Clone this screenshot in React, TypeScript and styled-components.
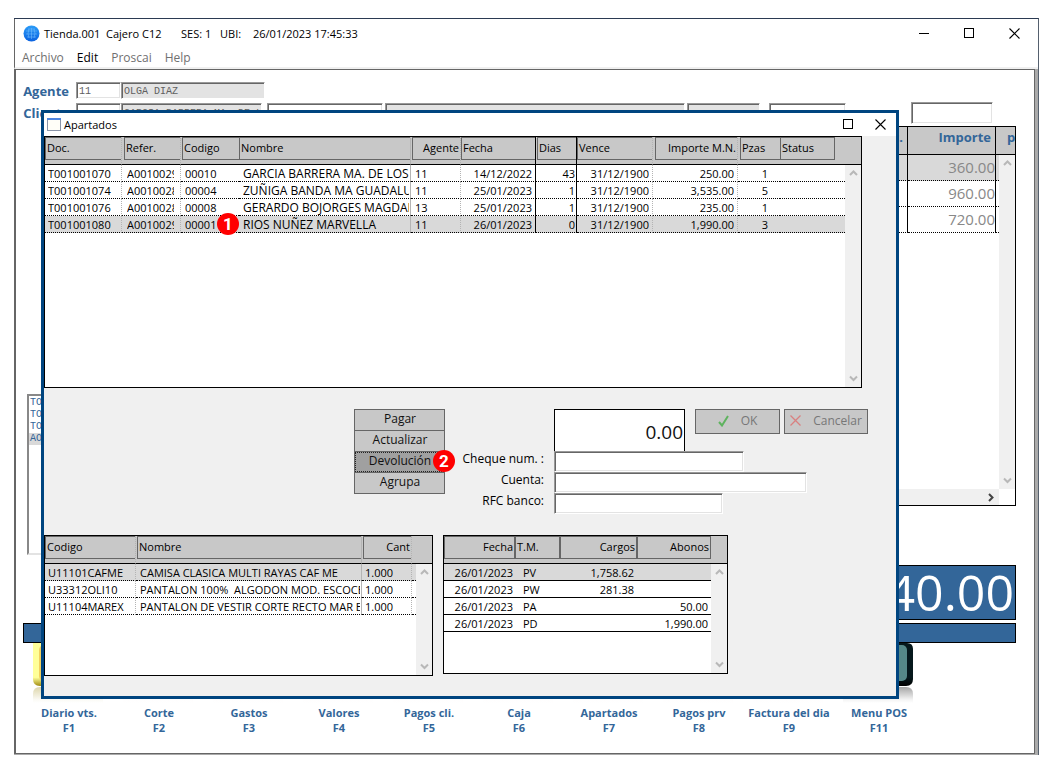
import React from "react";
import styled, { createGlobalStyle, css } from "styled-components";

const C = {
  blue: "#336699",
  frame: "#004580",
  line: "#666666",
  head: "#c8c8c8",
  sel: "#d9d9d9",
  face: "#f0f0f0",
};

const Global = createGlobalStyle`
  *, *::before, *::after { box-sizing: border-box; }
  body { margin: 0; background: #fff; font-family: "Open Sans", "Noto Sans", sans-serif; font-size: 12px; color: #111; }
  button, input { font: inherit; color: inherit; padding: 0; margin: 0; border-radius: 0; }
  ul { list-style: none; margin: 0; padding: 0; }
`;

/* ---------- main window ---------- */

const Page = styled.div`
  display: flex;
  min-height: 100vh;
  padding: 18px 8px 10px 14px;
`;

const MainWindow = styled.main`
  position: relative;
  flex: 1;
  min-width: 0;
  display: flex;
  flex-direction: column;
  background: #fff;
  border-top: 1px solid #2b3a52;
  border-right: 1px solid #55606e;
`;

const TitleBar = styled.header`
  display: flex;
  align-items: center;
  height: 29px;
  padding: 0 18px 0 8px;
  border-left: 1px solid ${C.line};
  white-space: nowrap;
`;

const TitleText = styled.h1`
  display: flex;
  flex: 1;
  margin: 0 0 0 4px;
  font-size: 11px;
  font-weight: 400;
  color: #000;
`;

const TitlePart = styled.span<{ $w: number }>`
  min-width: ${(p) => p.$w}px;
`;

const WindowButtons = styled.div<{ $gap: number }>`
  display: flex;
  gap: ${(p) => p.$gap}px;
`;

const WindowButton = styled.button`
  display: flex;
  border: 0;
  background: none;
`;

const MenuBar = styled.nav`
  display: flex;
  gap: 13px;
  height: 21px;
  padding-left: 7px;
  border-left: 1px solid ${C.line};
  border-bottom: 2px solid ${C.face};
`;

const MenuItem = styled.button<{ $active?: boolean }>`
  border: 0;
  background: none;
  line-height: 19px;
  font-size: 12px;
  color: ${(p) => (p.$active ? "#000" : "#707070")};
`;

const Body = styled.div`
  flex: 1;
  display: flex;
  flex-direction: column;
  border-right: 3px solid #aaaaaa;
  border-bottom: 1px solid #aaaaaa;
`;

const Inner = styled.div`
  flex: 1;
  border: 1px solid ${C.line};
  border-left-width: 2px;
  padding: 12px 18px 0 7px;
`;

const FieldRow = styled.div<{ $h: number }>`
  display: flex;
  align-items: center;
  height: ${(p) => p.$h}px;
`;

const FieldLabel = styled.label`
  width: 46px;
  margin-right: 7px;
  display: flex;
  justify-content: flex-end;
  font-weight: 700;
  font-size: 13px;
  line-height: 16px;
  color: ${C.blue};
`;

const Input = styled.input<{ $w: number; $h: number; $gray?: boolean; $ml?: number }>`
  width: ${(p) => p.$w}px;
  height: ${(p) => p.$h}px;
  margin-left: ${(p) => p.$ml ?? 0}px;
  padding: 2px 2px 0;
  border: 1px solid;
  border-color: #999 #fff #fff #999;
  box-shadow: inset 1px 1px ${C.line}, inset -1px -1px #e3e3e3;
  background: ${(p) => (p.$gray ? "#e3e3e3" : "#fff")};
  font-family: "Liberation Mono", monospace;
  font-size: 10px;
  color: #606060;
  outline: 0;
`;

const SaleArea = styled.div`
  display: flex;
  gap: 12px;
  padding-left: 4px;
`;

const Tickets = styled.ul`
  align-self: flex-end;
  width: 210px;
  height: 161px;
  padding: 1px 0;
  border: 2px solid;
  border-color: #888 #e3e3e3 #e3e3e3 #888;
  font: 10px/12px "Liberation Mono", monospace;
  color: ${C.blue};
`;

const Ticket = styled.li<{ $on?: boolean }>`
  padding-left: 1px;
  background: ${(p) => (p.$on ? C.sel : "none")};
`;

const SaleGrid = styled.div`
  flex: 1;
  min-width: 0;
  height: 380px;
  margin-bottom: 49px;
  display: flex;
  border: 1px solid #000;
`;

const SaleMain = styled.div`
  flex: 1;
  min-width: 0;
  display: flex;
  flex-direction: column;
`;

const SaleTable = styled.table`
  width: 100%;
  table-layout: fixed;
  border-spacing: 0;

  th {
    height: 28px;
    padding: 0 4px 6px;
    border-right: 1px solid #000;
    border-bottom: 1px solid #000;
    background: ${C.head};
    font-size: 13px;
    line-height: 21px;
    color: ${C.blue};
    text-align: right;
  }
  td {
    height: 26px;
    padding: 0;
    border-right: 1px solid #000;
    border-bottom: 1px dotted #000;
    font-size: 15px;
    line-height: 25px;
    color: #888;
    text-align: right;
  }
  th:last-child, td:last-child { padding: 0; border-right: 0; }
  tbody tr:first-child td { background: ${C.sel}; }
`;

const HScroll = styled.div`
  margin-top: auto;
  height: 16px;
  display: flex;
  align-items: center;
  justify-content: flex-end;
  padding-right: 4px;
  background: ${C.face};
`;

const TotalBox = styled.output`
  display: flex;
  justify-content: flex-end;
  align-items: center;
  width: 420px;
  height: 55px;
  margin: 10px 0 0 auto;
  padding-right: 1px;
  border: 1px solid #000;
  background: ${C.blue};
  color: #fff;
  font-size: 50px;
  line-height: 53px;
`;

const BlueBar = styled.div`
  height: 20px;
  margin-top: 3px;
  border: 1px solid #000;
  background: ${C.blue};
`;

const Keys = styled.div`
  display: flex;
  padding-left: 1px;
`;

const Key = styled.button`
  width: 90px;
  display: flex;
  flex-direction: column;
  align-items: center;
  border: 0;
  background: none;
  font-size: 11px;
  font-weight: 700;
  line-height: 15px;
  white-space: nowrap;
  color: ${C.blue};
`;

const KeyArt = styled.svg`
  display: block;
  width: 72px;
  height: 62px;
`;

/* ---------- grids ---------- */

const ScrollColumn = styled.div`
  flex: none;
  width: 16px;
  display: flex;
  flex-direction: column;
`;

const ScrollHead = styled.div`
  height: 28px;
  padding-left: 8px;
  overflow: hidden;
  border-bottom: 1px solid #000;
  background: ${C.head};
  font-size: 13px;
  font-weight: 700;
  line-height: 21px;
  color: ${C.blue};
`;

const Track = styled.div`
  flex: 1;
  display: flex;
  flex-direction: column;
  justify-content: space-between;
  align-items: center;
  padding: 4px 0;
  background: ${C.face};
`;

const Corner = styled.div`
  height: 16px;
  background: #fff;
`;

const GridFrame = styled.div<{ $w?: number; $h: number }>`
  display: flex;
  ${(p) => p.$w && css`width: ${p.$w}px;`}
  height: ${(p) => p.$h}px;
  border: 1px solid #000;
  background: #fff;
`;

const GridMain = styled.div`
  flex: 1;
  min-width: 0;
`;

const Table = styled.table`
  width: 100%;
  table-layout: fixed;
  border-spacing: 0;
  font-size: 11px;
  color: #000;
`;

type Sep = "dot" | "gray" | "black" | "none";
const sepCss = (s?: Sep) =>
  s === "dot" ? "1px dotted #b4b4b4" : s === "gray" ? "1px solid #b4b4b4" : s === "black" ? "1px solid #000" : "0";

const Th = styled.th<{ $sep?: Sep; $inset?: number }>`
  height: 28px;
  padding: 0 0 0 ${(p) => p.$inset ?? 0}px;
  vertical-align: top;
  font-weight: 400;
  background: ${C.head};
  border-right: ${(p) => sepCss(p.$sep)};
  border-bottom: 1px solid #000;
`;

const HeadBox = styled.div<{ $align?: string; $closed?: boolean; $w?: number }>`
  height: 23px;
  ${(p) => p.$w && css`width: ${p.$w}px;`}
  padding: 0 1px;
  border: 1px solid ${C.line};
  ${(p) => !p.$closed && css`border-right: 0;`}
  line-height: 20px;
  font-size: 11px;
  text-align: ${(p) => p.$align ?? "left"};
  white-space: nowrap;
`;

const Tr = styled.tr<{ $on?: boolean }>`
  background: ${(p) => (p.$on ? C.sel : "#fff")};
`;

const Td = styled.td<{ $sep?: Sep; $align?: string; $pad?: string; $solid?: boolean; $size?: number }>`
  position: relative;
  height: 17px;
  padding: ${(p) => p.$pad ?? "0 3px"};
  border-right: ${(p) => sepCss(p.$sep)};
  border-bottom: 1px ${(p) => (p.$solid ? "solid" : "dotted")} #000;
  text-align: ${(p) => p.$align ?? "left"};
  font-size: ${(p) => p.$size ?? 11}px;
`;

const Clip = styled.div`
  height: 16px;
  line-height: 17px;
  overflow: hidden;
  white-space: pre;
`;

const Badge = styled.span`
  position: absolute;
  right: 0;
  top: -3px;
  z-index: 1;
  width: 22px;
  height: 22px;
  border-radius: 50%;
  background: #ff0000;
  color: #fff;
  font: 700 17px/22px Roboto, sans-serif;
  text-align: center;
`;

const ButtonBadge = styled(Badge)`
  right: -11px;
  top: -2px;
`;

/* ---------- dialog ---------- */

const Dialog = styled.section`
  position: absolute;
  top: 91px;
  left: 27px;
  right: 139px;
  border: 3px solid ${C.frame};
  padding-bottom: 20px;
  background: ${C.face};
`;

const DialogTitle = styled.header`
  display: flex;
  align-items: center;
  height: 23px;
  padding: 0 10px 0 3px;
  background: #fff;
`;

const DialogName = styled.h2`
  flex: 1;
  margin: 0 0 0 3px;
  font-size: 11px;
  font-weight: 400;
  color: #000;
`;

const DocArea = styled.div`
  margin-right: 34px;
`;

const Middle = styled.div`
  display: flex;
  align-items: flex-start;
  margin: 20px 0 21px;
  padding-left: 310px;
`;

const Actions = styled.div`
  width: 91px;
  display: flex;
  flex-direction: column;
  padding-top: 1px;
`;

const Action = styled.button<{ $on?: boolean }>`
  position: relative;
  height: 22px;
  margin-bottom: -1px;
  padding: 0 0 2px 1px;
  border: 1px solid ${C.line};
  background: ${(p) => (p.$on ? "#a0a0a0" : C.head)};
  line-height: 18px;
  ${(p) => p.$on && css`outline: 1px dotted #222; outline-offset: -2px;`}
`;

const Payment = styled.div`
  flex: 1;
  display: grid;
  grid-template-columns: 109px 1fr;
  grid-template-rows: 43px 21px 21px 21px;
`;

const PayLabel = styled.label`
  padding-right: 10px;
  text-align: right;
  line-height: 16px;
  color: #000;
`;

const AmountRow = styled.div`
  grid-column: 2;
  display: flex;
  align-items: flex-start;
  padding-top: 1px;
`;

const Amount = styled.output`
  width: 131px;
  height: 42px;
  margin-right: 10px;
  padding: 0 1px;
  border: 1px solid #000;
  border-bottom: 0;
  background: #fff;
  font-size: 19px;
  line-height: 44px;
  text-align: right;
`;

const Confirm = styled.button<{ $w: number; $gap: number }>`
  display: flex;
  align-items: center;
  justify-content: center;
  gap: ${(p) => p.$gap}px;
  width: ${(p) => p.$w}px;
  height: 25px;
  margin-right: 4px;
  padding-bottom: 2px;
  border: 1px solid ${C.line};
  background: ${C.head};
  color: #777;
`;

const Lower = styled.div`
  display: flex;
  align-items: flex-start;
  gap: 10px;
`;

/* ---------- drawings ---------- */

const Chevron = ({ dir, color = "#b8b8b8" }: { dir: "up" | "down" | "right"; color?: string }) => {
  const d = { up: "M1 6L4.500 2.500L8 6", down: "M1 2.500L4.500 6L8 2.500", right: "M3 1L6.500 4.500L3 8" }[dir];
  return (
    <svg width="9" height="9" viewBox="0 0 9 9" aria-hidden="true">
      <path d={d} fill="none" stroke={color} strokeWidth="2" />
    </svg>
  );
};

const Globe = () => (
  <svg width="17" height="17" viewBox="0 0 17 17" aria-hidden="true">
    <defs>
      <linearGradient id="globe" x1="0" y1="0" x2="0" y2="1">
        <stop offset="0" stopColor="#2b9cf8" />
        <stop offset="1" stopColor="#0a62e0" />
      </linearGradient>
    </defs>
    <circle cx="8.500" cy="8.500" r="8" fill="url(#globe)" />
    <path
      d="M3 6h11M3 9h11M4 12h9M5 4h7M6 4q-2 4.500 0 9M8.500 3v11M11 4q2 4.500 0 9"
      fill="none"
      stroke="#7cc4ff"
      strokeOpacity="0.6"
      strokeWidth="0.8"
    />
  </svg>
);

const MinIcon = () => (
  <svg width="10" height="11" viewBox="0 0 10 11" aria-hidden="true">
    <path d="M0 5.500h10" stroke="#000" />
  </svg>
);
const MaxIcon = () => (
  <svg width="10" height="10" viewBox="0 0 10 10" aria-hidden="true">
    <rect x="0.500" y="0.500" width="9" height="9" fill="none" stroke="#000" />
  </svg>
);
const CloseIcon = () => (
  <svg width="11" height="11" viewBox="0 0 11 11" aria-hidden="true">
    <path d="M0.500 0.500l10 10M10.500 0.500l-10 10" stroke="#000" strokeWidth="1.100" />
  </svg>
);
const FormIcon = () => (
  <svg width="14" height="13" viewBox="0 0 14 13" aria-hidden="true">
    <rect x="0.500" y="0.500" width="13" height="12" fill="#fffef8" stroke="#8a94a8" />
    <path d="M0 1h14" stroke="#4f86e0" strokeWidth="2" />
  </svg>
);
const CheckIcon = () => (
  <svg width="11" height="12" viewBox="0 0 11 12" aria-hidden="true">
    <path d="M1 7l3 3.500L10 1" fill="none" stroke="#5fb35f" strokeWidth="2" />
  </svg>
);
const CrossIcon = () => (
  <svg width="11" height="11" viewBox="0 0 11 11" aria-hidden="true">
    <path d="M0.500 0.500l10 10M10.500 0.500l-10 10" stroke="#d98080" strokeWidth="1.300" />
  </svg>
);

const KeyDrawing = ({ id, edge, shade, face }: { id: string; edge: string; shade: string; face: string }) => (
  <KeyArt viewBox="0 0 72 62" aria-hidden="true">
    <defs>
      <linearGradient id={`e${id}`} x1="0" y1="0" x2="0" y2="1">
        <stop offset="0" stopColor={edge} />
        <stop offset="0.800" stopColor={edge} />
        <stop offset="1" stopColor={shade} />
      </linearGradient>
      <linearGradient id={`r${id}`} x1="0" y1="0" x2="0" y2="1">
        <stop offset="0" stopColor={shade} stopOpacity="0.350" />
        <stop offset="0.800" stopColor={shade} stopOpacity="0.040" />
        <stop offset="1" stopColor={shade} stopOpacity="0" />
      </linearGradient>
    </defs>
    <path d="M0 0h64q6 0 6 6v30q0 7-7 7H7q-7 0-7-7z" fill={`url(#e${id})`} />
    <rect x="6" y="2" width="58" height="36" rx="5" fill={face} />
    <path d="M0 60V51q0-7 7-7h56q7 0 7 7v9z" fill={`url(#r${id})`} />
  </KeyArt>
);

/* ---------- data ---------- */

type Col = {
  name: string;
  w?: number;
  sep?: Sep;
  inset?: number;
  headAlign?: string;
  closed?: boolean;
  boxW?: number;
  align?: string;
  pad?: string;
  size?: number;
};

const docCols: Col[] = [
  { name: "Doc.", w: 77, sep: "dot" },
  { name: "Refer.", w: 59, sep: "dot", inset: 2, pad: "0 6px 0 5px" },
  { name: "Codigo", w: 58, sep: "none", inset: 1, pad: "0 4px" },
  { name: "Nombre", w: 172, sep: "gray", pad: "0 1px 0 4px", size: 12 },
  { name: "Agente", w: 50, sep: "dot", inset: 1, headAlign: "right", pad: "0 4px" },
  { name: "Fecha", w: 75, sep: "black", align: "right" },
  { name: "Dias", w: 41, sep: "black", inset: 1, align: "right", pad: "0 1px" },
  { name: "Vence", w: 76, sep: "dot", align: "right" },
  { name: "Importe M.N.", w: 85, sep: "dot", inset: 2, headAlign: "right", align: "right" },
  { name: "Pzas", w: 42, inset: 2, align: "right", pad: "0 12px" },
  { name: "Status", closed: true, boxW: 55 },
];
const docs = [
  ["T001001070", "A0010029", "00010", "GARCIA BARRERA MA. DE LOS A", "11", "14/12/2022", "43", "31/12/1900", "250.00", "1", ""],
  ["T001001074", "A0010028", "00004", "ZUÑIGA BANDA MA GUADALUPE", "11", "25/01/2023", "1", "31/12/1900", "3,535.00", "5", ""],
  ["T001001076", "A0010028", "00008", "GERARDO BOJORGES MAGDALE", "13", "25/01/2023", "1", "31/12/1900", "235.00", "1", ""],
  ["T001001080", "A0010029", "00001", "RIOS NUÑEZ MARVELLA", "11", "26/01/2023", "0", "31/12/1900", "1,990.00", "3", ""],
];

const itemCols: Col[] = [
  { name: "Codigo", w: 91, sep: "dot" },
  { name: "Nombre", w: 226, sep: "gray", inset: 1, pad: "0 1px 0 4px" },
  { name: "Cant", w: 50, sep: "dot", inset: 1, headAlign: "right" },
  { name: "" },
];
const items = [
  ["U11101CAFME", "CAMISA CLASICA MULTI RAYAS CAF ME", "1.000", ""],
  ["U33312OLI10", "PANTALON 100%  ALGODON MOD. ESCOCE", "1.000", ""],
  ["U11104MAREX", "PANTALON DE VESTIR CORTE RECTO MAR E", "1.000", ""],
];

const moveCols: Col[] = [
  { name: "Fecha", w: 71, headAlign: "right", closed: true, align: "right", pad: "0 2px" },
  { name: "T.M.", w: 45, closed: true, pad: "0 8px" },
  { name: "Cargos", w: 77, headAlign: "right", closed: true, align: "right" },
  { name: "Abonos", headAlign: "right", closed: true, align: "right" },
];
const moves = [
  ["26/01/2023", "PV", "1,758.62", ""],
  ["26/01/2023", "PW", "281.38", ""],
  ["26/01/2023", "PA", "", "50.00"],
  ["26/01/2023", "PD", "", "1,990.00"],
];

const pale = ["#f6eeee", "#eadede", "#f6eeee"];
const keys: string[][] = [
  ["Diario vts.", "F1", "#ffff99", "#a08a10", "#f2d060"],
  ["Corte", "F2", ...pale],
  ["Gastos", "F3", ...pale],
  ["Valores", "F4", ...pale],
  ["Pagos cli.", "F5", ...pale],
  ["Caja", "F6", ...pale],
  ["Apartados", "F7", ...pale],
  ["Pagos prv", "F8", ...pale],
  ["Factura del dia", "F9", ...pale],
  ["Menu POS", "F11", "#06181c", "#000000", "#558888"],
];

const sales = ["360.00", "960.00", "720.00"];

type GridProps = {
  cols: Col[];
  rows: string[][];
  selected: number;
  height: number;
  width?: number;
  solid?: boolean;
  badge?: { row: number; col: number; text: string };
};

const Grid = ({ cols, rows, selected, height, width, solid, badge }: GridProps) => (
  <GridFrame $w={width} $h={height}>
    <GridMain>
      <Table>
        <colgroup>
          {cols.map((c, i) => (
            <col key={i} width={c.w} />
          ))}
        </colgroup>
        <thead>
          <tr>
            {cols.map((c, i) => (
              <Th key={i} $sep={c.sep} $inset={c.inset}>
                {c.name && (
                  <HeadBox $align={c.headAlign} $closed={c.closed} $w={c.boxW}>
                    {c.name}
                  </HeadBox>
                )}
              </Th>
            ))}
          </tr>
        </thead>
        <tbody>
          {rows.map((r, ri) => (
            <Tr key={ri} $on={ri === selected}>
              {r.map((v, ci) => (
                <Td
                  key={ci}
                  $sep={cols[ci].sep}
                  $align={cols[ci].align}
                  $pad={cols[ci].pad}
                  $size={cols[ci].size}
                  $solid={solid}
                >
                  <Clip>{v}</Clip>
                  {badge && badge.row === ri && badge.col === ci && <Badge>{badge.text}</Badge>}
                </Td>
              ))}
            </Tr>
          ))}
        </tbody>
      </Table>
    </GridMain>
    <ScrollColumn>
      <ScrollHead />
      <Track>
        <Chevron dir="up" />
        <Chevron dir="down" />
      </Track>
    </ScrollColumn>
  </GridFrame>
);

export default function App() {
  return (
    <Page>
      <Global />
      <MainWindow>
        <TitleBar>
          <Globe />
          <TitleText>
            <TitlePart $w={62}>Tienda.001</TitlePart>
            <TitlePart $w={75}>Cajero C12</TitlePart>
            <TitlePart $w={39}>SES: 1</TitlePart>
            <TitlePart $w={33}>UBI:</TitlePart>
            <TitlePart $w={103}>26/01/2023 17:45:33</TitlePart>
          </TitleText>
          <WindowButtons $gap={35}>
            <WindowButton aria-label="Minimizar"><MinIcon /></WindowButton>
            <WindowButton aria-label="Maximizar"><MaxIcon /></WindowButton>
            <WindowButton aria-label="Cerrar"><CloseIcon /></WindowButton>
          </WindowButtons>
        </TitleBar>
        <MenuBar>
          <MenuItem>Archivo</MenuItem>
          <MenuItem $active>Edit</MenuItem>
          <MenuItem>Proscai</MenuItem>
          <MenuItem>Help</MenuItem>
        </MenuBar>
        <Body>
          <Inner>
            <FieldRow $h={17}>
              <FieldLabel htmlFor="agente">Agente</FieldLabel>
              <Input id="agente" $w={45} $h={17} defaultValue="11" />
              <Input $w={144} $h={17} $gray defaultValue="OLGA DIAZ" aria-label="Nombre del agente" />
            </FieldRow>
            <FieldRow $h={27}>
              <FieldLabel htmlFor="cliente">Cliente</FieldLabel>
              <Input id="cliente" $w={45} $h={19} />
              <Input $w={141} $h={19} $gray defaultValue="GARCIA BARRERA MA. DE LA" aria-label="Nombre del cliente" />
              <Input $w={116} $h={19} $ml={5} aria-label="Referencia" />
              <Input $w={300} $h={19} $ml={2} $gray aria-label="Domicilio" />
              <Input $w={73} $h={19} $ml={2} $gray aria-label="Lista" />
              <Input $w={77} $h={19} $ml={9} aria-label="Descuento" />
              <Input $w={82} $h={22} $ml={65} aria-label="Folio" />
            </FieldRow>
            <SaleArea>
              <Tickets>
                <Ticket>TO</Ticket>
                <Ticket>TO</Ticket>
                <Ticket>TO</Ticket>
                <Ticket $on>AO</Ticket>
              </Tickets>
              <SaleGrid>
                <SaleMain>
                  <SaleTable>
                    <colgroup>
                      <col />
                      <col width={80} />
                      <col width={88} />
                      <col width={3} />
                    </colgroup>
                    <thead>
                      <tr>
                        <th />
                        <th>Desc.</th>
                        <th>Importe</th>
                        <th />
                      </tr>
                    </thead>
                    <tbody>
                      {sales.map((s) => (
                        <tr key={s}>
                          <td />
                          <td />
                          <td>{s}</td>
                          <td />
                        </tr>
                      ))}
                    </tbody>
                  </SaleTable>
                  <HScroll>
                    <Chevron dir="right" color="#444" />
                  </HScroll>
                </SaleMain>
                <ScrollColumn>
                  <ScrollHead>p</ScrollHead>
                  <Track>
                    <Chevron dir="up" />
                    <Chevron dir="down" />
                  </Track>
                  <Corner />
                </ScrollColumn>
              </SaleGrid>
            </SaleArea>
            <TotalBox>2,040.00</TotalBox>
            <BlueBar />
            <Keys>
              {keys.map(([label, fn, edge, shade, face]) => (
                <Key key={fn}>
                  <KeyDrawing id={fn} edge={edge} shade={shade} face={face} />
                  <span>{label}</span>
                  <span>{fn}</span>
                </Key>
              ))}
            </Keys>
          </Inner>
        </Body>

        <Dialog role="dialog" aria-label="Apartados">
          <DialogTitle>
            <FormIcon />
            <DialogName>Apartados</DialogName>
            <WindowButtons $gap={22}>
              <WindowButton aria-label="Maximizar"><MaxIcon /></WindowButton>
              <WindowButton aria-label="Cerrar"><CloseIcon /></WindowButton>
            </WindowButtons>
          </DialogTitle>
          <DocArea>
            <Grid cols={docCols} rows={docs} selected={3} height={252} badge={{ row: 3, col: 2, text: "1" }} />
          </DocArea>
          <Middle>
            <Actions>
              <Action>Pagar</Action>
              <Action>Actualizar</Action>
              <Action $on>
                Devolución
                <ButtonBadge>2</ButtonBadge>
              </Action>
              <Action>Agrupa</Action>
            </Actions>
            <Payment>
              <AmountRow>
                <Amount>0.00</Amount>
                <Confirm $w={85} $gap={12}>
                  <CheckIcon /> OK
                </Confirm>
                <Confirm $w={84} $gap={12}>
                  <CrossIcon /> Cancelar
                </Confirm>
              </AmountRow>
              <PayLabel htmlFor="cheque">Cheque num. :</PayLabel>
              <Input id="cheque" $w={190} $h={21} />
              <PayLabel htmlFor="cuenta">Cuenta:</PayLabel>
              <Input id="cuenta" $w={253} $h={21} />
              <PayLabel htmlFor="rfc">RFC banco:</PayLabel>
              <Input id="rfc" $w={169} $h={21} />
            </Payment>
          </Middle>
          <Lower>
            <Grid cols={itemCols} rows={items} selected={0} width={389} height={141} />
            <Grid cols={moveCols} rows={moves} selected={0} width={285} height={139} solid />
          </Lower>
        </Dialog>
      </MainWindow>
    </Page>
  );
}
